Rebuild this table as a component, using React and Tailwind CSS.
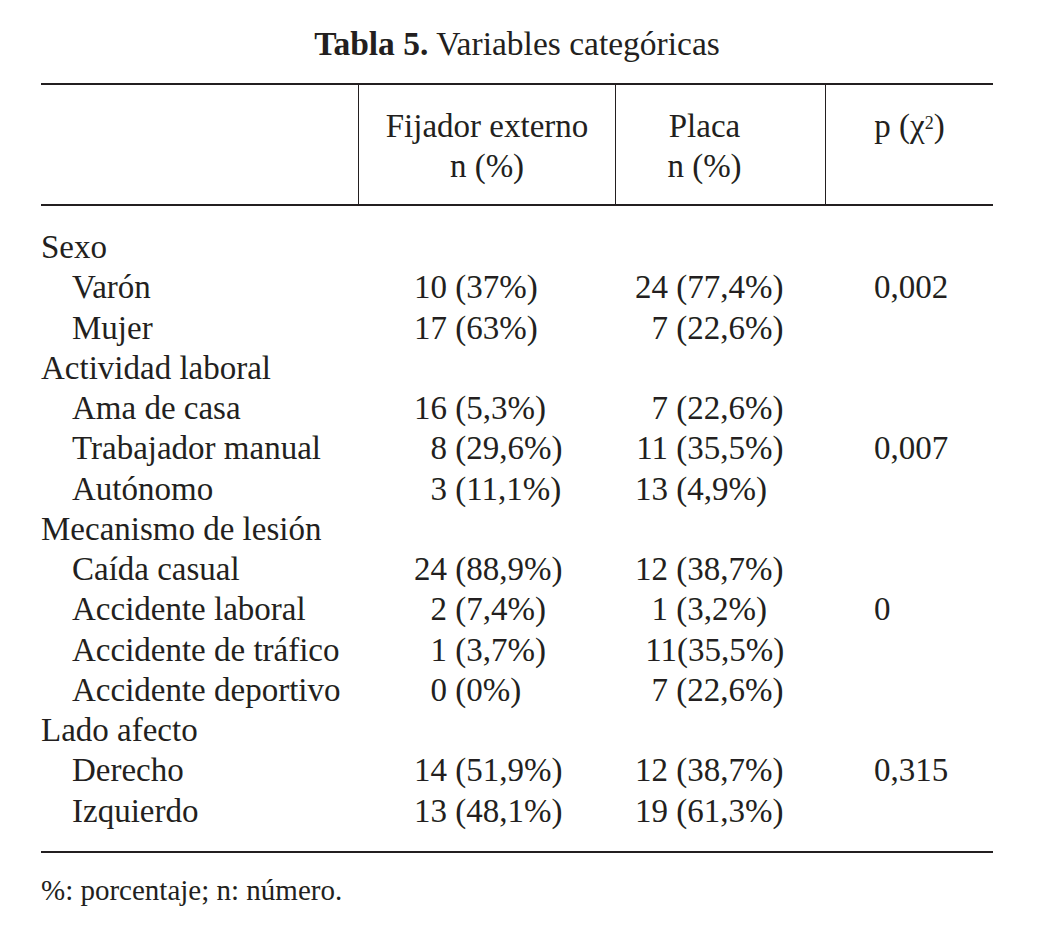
const rows = [
  { group: 'Sexo' },
  { label: 'Varón', a: ['10', '(37%)'], b: ['24', '(77,4%)'], p: '0,002' },
  { label: 'Mujer', a: ['17', '(63%)'], b: ['7', '(22,6%)'] },
  { group: 'Actividad laboral' },
  { label: 'Ama de casa', a: ['16', '(5,3%)'], b: ['7', '(22,6%)'] },
  { label: 'Trabajador manual', a: ['8', '(29,6%)'], b: ['11', '(35,5%)'], p: '0,007' },
  { label: 'Autónomo', a: ['3', '(11,1%)'], b: ['13', '(4,9%)'] },
  { group: 'Mecanismo de lesión' },
  { label: 'Caída casual', a: ['24', '(88,9%)'], b: ['12', '(38,7%)'] },
  { label: 'Accidente laboral', a: ['2', '(7,4%)'], b: ['1', '(3,2%)'], p: '0' },
  { label: 'Accidente de tráfico', a: ['1', '(3,7%)'], b: ['11', '(35,5%)'], tight: true },
  { label: 'Accidente deportivo', a: ['0', '(0%)'], b: ['7', '(22,6%)'] },
  { group: 'Lado afecto' },
  { label: 'Derecho', a: ['14', '(51,9%)'], b: ['12', '(38,7%)'], p: '0,315' },
  { label: 'Izquierdo', a: ['13', '(48,1%)'], b: ['19', '(61,3%)'] },
];

function Count({ value, numWidth, tight }) {
  if (tight) {
    return (
      <div className="flex">
        <span className="w-[62px] text-right">{value[0]}</span>
        <span>{value[1]}</span>
      </div>
    );
  }
  return (
    <div className="flex">
      <span className="text-right" style={{ width: numWidth }}>{value[0]}</span>
      <span>&nbsp;{value[1]}</span>
    </div>
  );
}

export default function App() {
  return (
    <div className="min-h-[941px] bg-white text-[#231f20] font-serif">
      <div className="w-[952px] ml-[41px] pt-[24px] [font-family:Liberation_Serif,Times_New_Roman,serif]">
        <h1 className="text-center text-[33.5px] leading-[40px]">
          <span className="font-bold">Tabla 5.</span> Variables categóricas
        </h1>

        <div className="mt-[19px] text-[33px] leading-[40.25px]">
          <div className="grid grid-cols-[317px_257px_210px_168px] border-t-2 border-b-2 border-[#231f20]">
            <div className="h-[119px]" />
            <div className="border-l-[1.5px] border-[#231f20] pt-[21px] text-center">
              <div>Fijador externo</div>
              <div>n (%)</div>
            </div>
            <div className="border-l-[1.5px] border-[#231f20] pt-[21px] pr-[32px] text-center">
              <div>Placa</div>
              <div>n (%)</div>
            </div>
            <div className="border-l-[1.5px] border-[#231f20] pt-[21px] text-center">
              p (χ<sup className="text-[18px] -top-[8px]">2</sup>)
            </div>
          </div>

          <div className="pt-[21px] pb-[20px] border-b-2 border-[#231f20]">
            {rows.map((r, i) =>
              r.group ? (
                <div key={i}>{r.group}</div>
              ) : (
                <div key={i} className="grid grid-cols-[317px_257px_210px_168px]">
                  <div className="pl-[31px]">{r.label}</div>
                  <div>
                    <Count value={r.a} numWidth="89px" />
                  </div>
                  <div>
                    <Count value={r.b} numWidth="53px" tight={r.tight} />
                  </div>
                  <div className="pl-[49px]">{r.p}</div>
                </div>
              )
            )}
          </div>
        </div>

        <p className="mt-[17px] text-[29px] leading-[40px]">%: porcentaje; n: número.</p>
      </div>
    </div>
  );
}
